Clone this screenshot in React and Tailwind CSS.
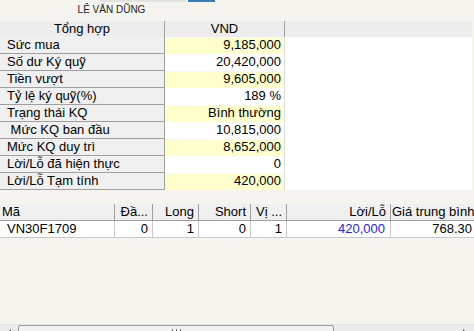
import React from "react";

const rows = [
  ["Sức mua", "9,185,000", true],
  ["Số dư Ký quỹ", "20,420,000", false],
  ["Tiền vượt", "9,605,000", true],
  ["Tỷ lệ ký quỹ(%)", "189 %", false],
  ["Trạng thái KQ", "Bình thường", true],
  ["\u00a0Mức KQ ban đầu", "10,815,000", false],
  ["Mức KQ duy trì", "8,652,000", true],
  ["Lời/Lỗ đã hiện thực", "0", false],
  ["Lời/Lỗ Tạm tính", "420,000", true],
];

export default function App() {
  return (
    <div
      className="w-[474px] h-[331px] overflow-hidden bg-[#f5f4ee] flex flex-col text-[13px] text-black"
      style={{ fontFamily: '"Liberation Sans", Arial, sans-serif' }}
    >
      {/* top strip */}
      <div className="h-[2px] flex shrink-0">
        <div className="w-[100px]" />
        <div className="w-[86px] bg-[#e2e2e0]" />
        <div className="w-[2px]" />
        <div className="w-[27px] bg-[#3a7cbf]" />
      </div>
      {/* title */}
      <div className="h-[19px] w-[223px] flex items-center justify-center text-[10px] leading-[10px] text-[#222] shrink-0 pb-[3px]">
        LÊ VĂN DŨNG
      </div>

      {/* table 1 */}
      <div className="w-[472px] shrink-0 flex flex-col">
        <div className="grid grid-cols-[165px_120px_1fr] h-[16px] bg-[#ededee] leading-[16px]">
          <div className="border-r border-[#a0a0a0] text-center">Tổng hợp</div>
          <div className="border-r border-[#a0a0a0] text-center">VND</div>
          <div />
        </div>
        {rows.map(([label, value, yellow], i) => (
          <div key={i} className="grid grid-cols-[165px_120px_1fr] h-[17px] leading-[16px]">
            <div className="bg-[#f0f0f0] border-b border-r border-[#a0a0a0] pl-[7px] whitespace-pre">
              {label}
            </div>
            <div
              className={
                "text-right pr-[3px] border-r border-[#dcdcdc] " +
                (yellow ? "bg-[#ffffcc]" : "bg-white")
              }
            >
              {value}
            </div>
            <div className="bg-white" />
          </div>
        ))}
      </div>

      {/* table 2 */}
      <div className="mt-[14px] shrink-0 flex flex-col w-[474px]">
        <div className="grid grid-cols-[115px_38px_46px_52px_36px_104px_83px] h-[17px] bg-[#f0f0f0] border-b border-[#a0a0a0] leading-[16px] whitespace-nowrap">
          <div className="border-r border-[#a0a0a0] pl-[2px]">Mã</div>
          <div className="border-r border-[#a0a0a0] text-right pr-[4px]">Đầ...</div>
          <div className="border-r border-[#a0a0a0] text-right pr-[4px]">Long</div>
          <div className="border-r border-[#a0a0a0] text-right pr-[4px]">Short</div>
          <div className="border-r border-[#a0a0a0] text-right pr-[4px]">Vị ...</div>
          <div className="border-r border-[#a0a0a0] text-right pr-[4px]">Lời/Lỗ</div>
          <div className="pl-[1px] overflow-hidden">Giá trung bình</div>
        </div>
        <div className="grid grid-cols-[115px_38px_46px_52px_36px_104px_83px] h-[17px] bg-white border-b border-[#c8c8c8] leading-[16px] whitespace-nowrap">
          <div className="border-r border-[#c8c8c8] pl-[7px]">VN30F1709</div>
          <div className="border-r border-[#c8c8c8] text-right pr-[4px]">0</div>
          <div className="border-r border-[#c8c8c8] text-right pr-[4px]">1</div>
          <div className="border-r border-[#c8c8c8] text-right pr-[4px]">0</div>
          <div className="border-r border-[#c8c8c8] text-right pr-[4px]">1</div>
          <div className="border-r border-[#c8c8c8] text-right pr-[5px] text-[#2424e6]">420,000</div>
          <div className="text-right pr-[2px]">768.30</div>
        </div>
      </div>

      <div className="flex-1" />

      {/* scrollbar (partially visible) */}
      <div className="h-[7px] shrink-0 overflow-hidden">
        <div className="h-[17px] bg-[#ebebeb] border-t border-[#e4e4e4] flex items-start relative">
          <div className="w-[18px] h-full flex justify-center pt-[4px]">
            <svg width="6" height="8" viewBox="0 0 6 8">
              <path d="M5 0 L1 4 L5 8 Z" fill="#606060" />
            </svg>
          </div>
          <div className="w-[316px] h-full border border-[#9c9c9c] rounded-t-[2px] bg-[#f2f2f2] flex justify-center pt-[3px]">
            <div className="flex gap-[1px]">
              <div className="w-[1px] h-[6px] bg-[#707070]" />
              <div className="w-[1px] h-[6px] bg-[#fff]" />
              <div className="w-[1px] h-[6px] bg-[#707070]" />
              <div className="w-[1px] h-[6px] bg-[#fff]" />
              <div className="w-[1px] h-[6px] bg-[#707070]" />
            </div>
          </div>
          <div className="flex-1" />
          <div className="w-[18px] h-full flex justify-center pt-[4px]">
            <svg width="6" height="8" viewBox="0 0 6 8">
              <path d="M1 0 L5 4 L1 8 Z" fill="#606060" />
            </svg>
          </div>
        </div>
      </div>
    </div>
  );
}
